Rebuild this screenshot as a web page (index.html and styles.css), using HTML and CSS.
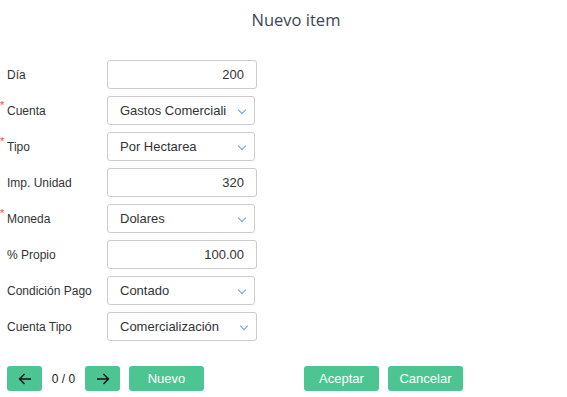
FILE: index.html
```html
<!DOCTYPE html>
<html lang="en">
<head>
    <meta charset="UTF-8">
    <meta name="viewport" content="width=device-width, initial-scale=1.0">
    <title>Nuevo item</title>
    <link rel="stylesheet" href="styles.css">
</head>
<body>
    <h2 class="title">Nuevo item</h2>

    <div class="form">
        <div class="row">
            <label>Día</label>
            <div class="field num">200</div>
        </div>
        <div class="row">
            <label class="req">Cuenta</label>
            <div class="field sel">Gastos Comerciali<span class="chev"></span></div>
        </div>
        <div class="row">
            <label class="req">Tipo</label>
            <div class="field sel">Por Hectarea<span class="chev"></span></div>
        </div>
        <div class="row">
            <label>Imp. Unidad</label>
            <div class="field num">320</div>
        </div>
        <div class="row">
            <label class="req">Moneda</label>
            <div class="field sel">Dolares<span class="chev"></span></div>
        </div>
        <div class="row">
            <label>% Propio</label>
            <div class="field num">100.00</div>
        </div>
        <div class="row">
            <label>Condición Pago</label>
            <div class="field sel">Contado<span class="chev"></span></div>
        </div>
        <div class="row">
            <label>Cuenta Tipo</label>
            <div class="field sel full">Comercialización<span class="chev"></span></div>
        </div>
    </div>

    <div class="actions">
        <button class="btn arrow"><svg width="14" height="12" viewBox="0 0 14 12"><path d="M13 6H1.5M6.5 1 1.5 6l5 5" fill="none" stroke="#111" stroke-width="1.4"/></svg></button>
        <span class="count">0 / 0</span>
        <button class="btn arrow"><svg width="14" height="12" viewBox="0 0 14 12"><path d="M1 6h11.5M7.5 1l5 5-5 5" fill="none" stroke="#111" stroke-width="1.4"/></svg></button>
        <button class="btn wide">Nuevo</button>
        <button class="btn wide push">Aceptar</button>
        <button class="btn wide">Cancelar</button>
    </div>
</body>
</html>
```

FILE: styles.css
```css
body { font-family: "Liberation Sans", Arial, sans-serif; margin: 0; padding: 0; background-color: #fff; color: #333; }
.title { font-family: "Open Sans", sans-serif; font-weight: 400; font-size: 16.5px; color: #3f4550; text-align: center; margin: 0; padding: 8px 0 0 25px; height: 60px; box-sizing: border-box; }
.form { display: flex; flex-direction: column; gap: 7px; padding-left: 7px; }
.row { display: flex; align-items: center; height: 29px; }
.row label { width: 100px; font-size: 12px; position: relative; }
.req::before { content: "*"; color: #f04848; position: absolute; left: -7px; top: -5px; font-size: 11px; }
.field { width: 150px; height: 29px; box-sizing: border-box; border: 1px solid #ccc; border-radius: 3px; font-size: 13px; padding: 0 12px; display: flex; align-items: center; position: relative; }
.num { justify-content: flex-end; }
.sel { width: 148px; padding-right: 24px; white-space: nowrap; overflow: hidden; }
.full { width: 150px; }
.chev { position: absolute; right: 9px; top: 10px; width: 5px; height: 5px; border-right: 1.6px solid #6fa3d8; border-bottom: 1.6px solid #6fa3d8; transform: rotate(45deg); }
.actions { display: flex; align-items: center; margin-top: 25px; padding-left: 7px; }
.btn { height: 25px; background-color: #4dc593; color: white; border: none; border-radius: 3px; font-family: "Liberation Sans", Arial, sans-serif; font-size: 13px; padding: 0; cursor: pointer; display: flex; align-items: center; justify-content: center; }
.arrow { width: 35px; }
.count { font-size: 12px; color: #222; width: 43px; text-align: center; }
.wide { width: 75px; margin-left: 9px; }
.push { margin-left: 100px; }
```
